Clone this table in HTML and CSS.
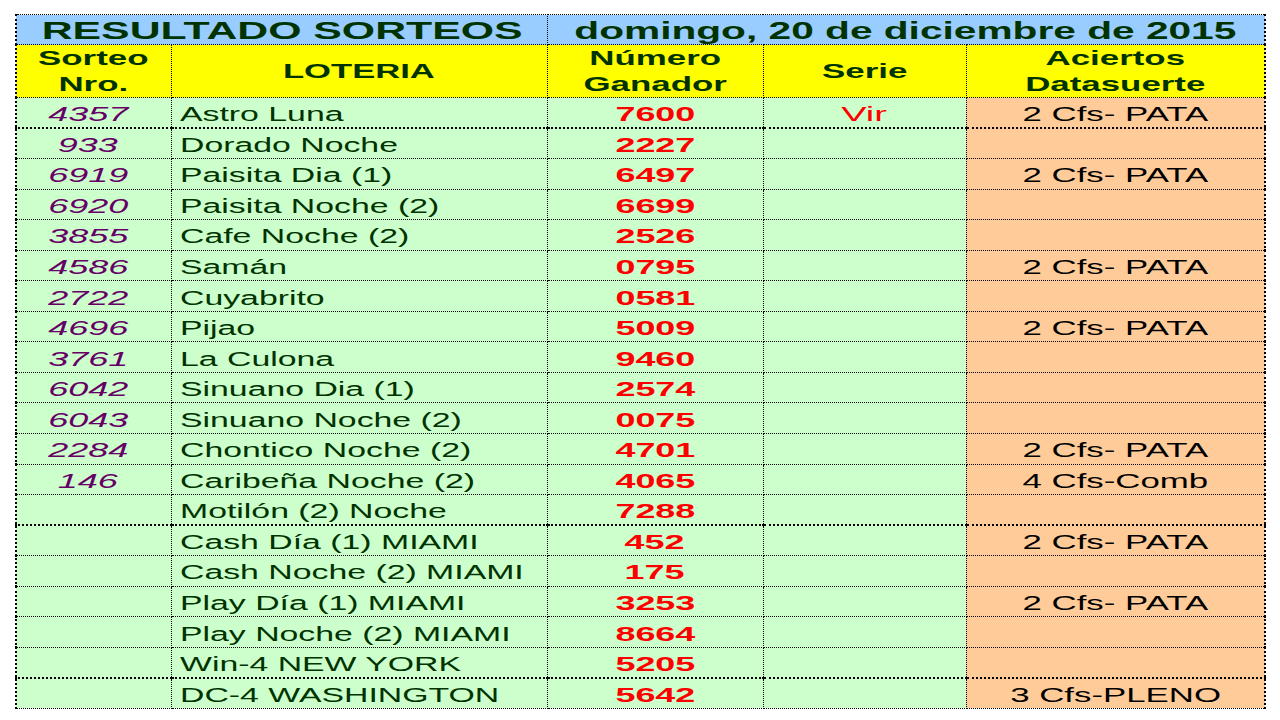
FILE: index.html
```html
<!DOCTYPE html>
<html lang="es">
<head>
<meta charset="utf-8">
<title>Resultado Sorteos</title>
<link rel="stylesheet" href="styles.css">
</head>
<body>
<table class="sheet">
  <colgroup>
    <col class="c-sorteo">
    <col class="c-loteria">
    <col class="c-numero">
    <col class="c-serie">
    <col class="c-aciertos">
  </colgroup>
  <tr class="r-title">
    <td colspan="2" class="title"><span class="s k-title">RESULTADO SORTEOS</span></td>
    <td colspan="3" class="title"><span class="s k-date">domingo, 20 de diciembre de 2015</span></td>
  </tr>
  <tr class="r-head">
    <td class="hd"><span class="s">Sorteo<br>Nro.</span></td>
    <td class="hd hd-single"><span class="s k-lot">LOTERIA</span></td>
    <td class="hd"><span class="s">Número<br>Ganador</span></td>
    <td class="hd"><span class="s">Serie</span></td>
    <td class="hd"><span class="s">Aciertos<br>Datasuerte</span></td>
  </tr>
  <tr class="row thick">
    <td class="num"><span class="s">4357</span></td>
    <td class="name"><span class="s">Astro Luna</span></td>
    <td class="win"><span class="s">7600</span></td>
    <td class="serie"><span class="s">Vir</span></td>
    <td class="hit"><span class="s">2 Cfs- PATA</span></td>
  </tr>
  <tr class="row">
    <td class="num"><span class="s">933</span></td>
    <td class="name"><span class="s">Dorado Noche</span></td>
    <td class="win"><span class="s">2227</span></td>
    <td class="serie"></td>
    <td class="hit"></td>
  </tr>
  <tr class="row">
    <td class="num"><span class="s">6919</span></td>
    <td class="name"><span class="s">Paisita Dia (1)</span></td>
    <td class="win"><span class="s">6497</span></td>
    <td class="serie"></td>
    <td class="hit"><span class="s">2 Cfs- PATA</span></td>
  </tr>
  <tr class="row">
    <td class="num"><span class="s">6920</span></td>
    <td class="name"><span class="s">Paisita Noche (2)</span></td>
    <td class="win"><span class="s">6699</span></td>
    <td class="serie"></td>
    <td class="hit"></td>
  </tr>
  <tr class="row">
    <td class="num"><span class="s">3855</span></td>
    <td class="name"><span class="s">Cafe Noche (2)</span></td>
    <td class="win"><span class="s">2526</span></td>
    <td class="serie"></td>
    <td class="hit"></td>
  </tr>
  <tr class="row">
    <td class="num"><span class="s">4586</span></td>
    <td class="name"><span class="s">Samán</span></td>
    <td class="win"><span class="s">0795</span></td>
    <td class="serie"></td>
    <td class="hit"><span class="s">2 Cfs- PATA</span></td>
  </tr>
  <tr class="row">
    <td class="num"><span class="s">2722</span></td>
    <td class="name"><span class="s">Cuyabrito</span></td>
    <td class="win"><span class="s">0581</span></td>
    <td class="serie"></td>
    <td class="hit"></td>
  </tr>
  <tr class="row">
    <td class="num"><span class="s">4696</span></td>
    <td class="name"><span class="s">Pijao</span></td>
    <td class="win"><span class="s">5009</span></td>
    <td class="serie"></td>
    <td class="hit"><span class="s">2 Cfs- PATA</span></td>
  </tr>
  <tr class="row">
    <td class="num"><span class="s">3761</span></td>
    <td class="name"><span class="s">La Culona</span></td>
    <td class="win"><span class="s">9460</span></td>
    <td class="serie"></td>
    <td class="hit"></td>
  </tr>
  <tr class="row">
    <td class="num"><span class="s">6042</span></td>
    <td class="name"><span class="s">Sinuano Dia (1)</span></td>
    <td class="win"><span class="s">2574</span></td>
    <td class="serie"></td>
    <td class="hit"></td>
  </tr>
  <tr class="row">
    <td class="num"><span class="s">6043</span></td>
    <td class="name"><span class="s">Sinuano Noche (2)</span></td>
    <td class="win"><span class="s">0075</span></td>
    <td class="serie"></td>
    <td class="hit"></td>
  </tr>
  <tr class="row">
    <td class="num"><span class="s">2284</span></td>
    <td class="name"><span class="s">Chontico Noche (2)</span></td>
    <td class="win"><span class="s">4701</span></td>
    <td class="serie"></td>
    <td class="hit"><span class="s">2 Cfs- PATA</span></td>
  </tr>
  <tr class="row">
    <td class="num"><span class="s">146</span></td>
    <td class="name"><span class="s">Caribeña Noche (2)</span></td>
    <td class="win"><span class="s">4065</span></td>
    <td class="serie"></td>
    <td class="hit"><span class="s">4 Cfs-Comb</span></td>
  </tr>
  <tr class="row thick">
    <td class="num"></td>
    <td class="name"><span class="s">Motilón (2) Noche</span></td>
    <td class="win"><span class="s">7288</span></td>
    <td class="serie"></td>
    <td class="hit"></td>
  </tr>
  <tr class="row">
    <td class="num"></td>
    <td class="name"><span class="s">Cash Día (1) MIAMI</span></td>
    <td class="win"><span class="s">452</span></td>
    <td class="serie"></td>
    <td class="hit"><span class="s">2 Cfs- PATA</span></td>
  </tr>
  <tr class="row">
    <td class="num"></td>
    <td class="name"><span class="s">Cash Noche (2) MIAMI</span></td>
    <td class="win"><span class="s">175</span></td>
    <td class="serie"></td>
    <td class="hit"></td>
  </tr>
  <tr class="row">
    <td class="num"></td>
    <td class="name"><span class="s">Play Día (1) MIAMI</span></td>
    <td class="win"><span class="s">3253</span></td>
    <td class="serie"></td>
    <td class="hit"><span class="s">2 Cfs- PATA</span></td>
  </tr>
  <tr class="row">
    <td class="num"></td>
    <td class="name"><span class="s">Play Noche (2) MIAMI</span></td>
    <td class="win"><span class="s">8664</span></td>
    <td class="serie"></td>
    <td class="hit"></td>
  </tr>
  <tr class="row thick">
    <td class="num"></td>
    <td class="name"><span class="s">Win-4 NEW YORK</span></td>
    <td class="win"><span class="s">5205</span></td>
    <td class="serie"></td>
    <td class="hit"></td>
  </tr>
  <tr class="row">
    <td class="num"></td>
    <td class="name"><span class="s">DC-4 WASHINGTON</span></td>
    <td class="win"><span class="s">5642</span></td>
    <td class="serie"></td>
    <td class="hit"><span class="s">3 Cfs-PLENO</span></td>
  </tr>
</table>
</body>
</html>
```

FILE: styles.css
```css
html, body {
  margin: 0;
  padding: 0;
  background: #ffffff;
}

body {
  font-family: "Liberation Sans", Arial, sans-serif;
}

.sheet {
  margin: 14px 0 0 15px;
  width: 1249px;
  table-layout: fixed;
  border-collapse: collapse;
  border-left: 2px dotted #000;
  border-right: 2px dotted #000;
}

.c-sorteo { width: 155px; }
.c-loteria { width: 376px; }
.c-numero { width: 216px; }
.c-serie { width: 203px; }
.c-aciertos { width: 299px; }

.sheet td {
  border: 1px dotted #000;
  padding: 0;
  white-space: nowrap;
  vertical-align: middle;
  text-align: center;
  background: #ccffcc;
}

/* horizontally stretched spreadsheet text */
.s {
  display: inline-block;
  transform: scaleX(1.7);
  transform-origin: center center;
}

/* title row */
.r-title { height: 30px; }
.sheet td.title {
  background: #99ccff;
  color: #003300;
  font-weight: bold;
  font-size: 23.5px;
  line-height: 26px;
  padding-top: 2px;
}
.k-title { transform: scaleX(1.82); }
.k-date { transform: scaleX(1.73); }

/* header row */
.r-head { height: 53px; }
.sheet td.hd {
  background: #ffff00;
  color: #003300;
  font-weight: bold;
  font-size: 21px;
  line-height: 26px;
}
.hd .s { transform: scaleX(1.66); }
.sheet td.hd-single { font-size: 20px; }
.hd .k-lot { transform: scaleX(1.73); }

/* data rows */
.row { height: 30.55px; }
.row td {
  font-size: 20px;
  line-height: 24px;
  padding-top: 3px;
}
.row.thick td { border-bottom: 2px dotted #000; }

.sheet td.num {
  color: #660066;
  font-style: italic;
  padding-right: 12px;
}
.num .s { transform: scaleX(1.8); }

.sheet td.name {
  color: #003300;
  text-align: left;
  padding-left: 8px;
}
.name .s {
  transform: scaleX(1.69);
  transform-origin: left center;
}

.sheet td.win {
  color: #ff0000;
  font-weight: bold;
  font-size: 21px;
}
.win .s { transform: scaleX(1.71); }

.sheet td.serie { color: #ff0000; }
.serie .s { transform: scaleX(1.9); }

.sheet td.hit {
  background: #ffcc99;
  color: #000000;
}
.hit .s { transform: scaleX(1.74); }
```
